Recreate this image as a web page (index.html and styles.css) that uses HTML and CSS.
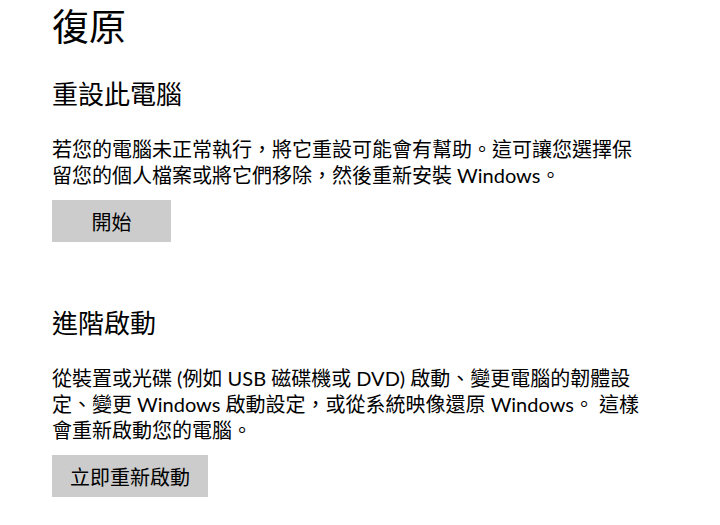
FILE: index.html
```html
<!DOCTYPE html>
<html lang="zh-TW">
<head>
    <meta charset="UTF-8">
    <meta name="viewport" content="width=device-width, initial-scale=1.0">
    <title>復原</title>
    <link rel="stylesheet" href="styles.css">
</head>
<body>
    <h1 class="page-title">復原</h1>

    <div class="section">
        <h2>重設此電腦</h2>
        <p>若您的電腦未正常執行，將它重設可能會有幫助。這可讓您選擇保留您的個人檔案或將它們移除，然後重新安裝 Windows。</p>
        <button class="action-btn">開始</button>
    </div>

    <div class="section section-advanced">
        <h2>進階啟動</h2>
        <p>從裝置或光碟 (例如 USB 磁碟機或 DVD) 啟動、變更電腦的韌體設定、變更 Windows 啟動設定，或從系統映像還原 Windows。 這樣會重新啟動您的電腦。</p>
        <button class="action-btn">立即重新啟動</button>
    </div>
</body>
</html>
```

FILE: styles.css
```css
body {
    margin: 0;
    padding: 5px 0 0 52px;
    background-color: #fff;
    color: #000;
    font-family: Lato, "Noto Sans CJK TC", sans-serif;
}
.page-title {
    margin: 0 0 28px;
    font-size: 37px;
    line-height: 44px;
    font-weight: normal;
}
.section h2 {
    margin: 0 0 25px;
    font-size: 26px;
    line-height: 34px;
    font-weight: normal;
}
.section p {
    max-width: 590px;
    margin: 0 0 12px;
    font-size: 20px;
    line-height: 26px;
}
.section-advanced {
    margin-top: 64px;
}
.action-btn {
    display: block;
    min-width: 119px;
    height: 42px;
    padding: 0 18px;
    border: none;
    background-color: #cccccc;
    color: #000;
    font-family: inherit;
    font-size: 20px;
}
```
